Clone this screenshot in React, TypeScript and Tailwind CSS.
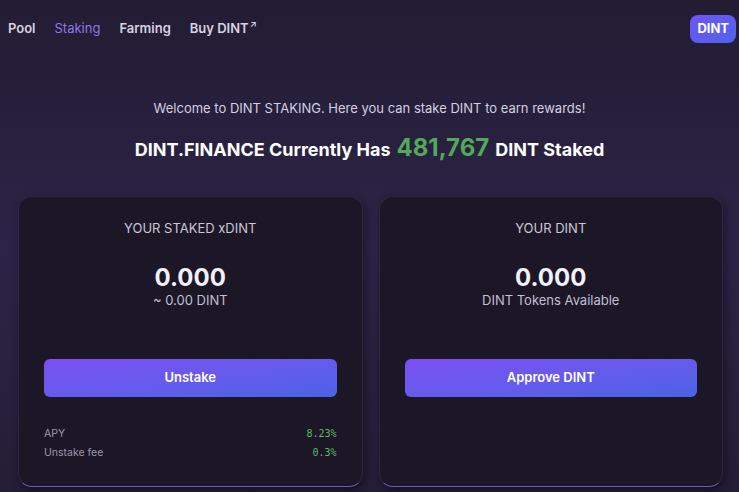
import React from "react";

function Card({
  title,
  value,
  sub,
  button,
  rows,
}: {
  title: string;
  value: string;
  sub: string;
  button: string;
  rows?: { label: string; value: string }[];
}) {
  return (
    <div className="flex h-[291px] flex-col rounded-[14px] border border-[#2c2640] border-b-[#6a58c8] bg-[#1b1727] px-[25px] pt-[22px] shadow-[2px_4px_10px_rgba(0,0,0,0.45)]">
      <div className="text-center text-[13px] leading-[18px] text-[#cbc7d8]">{title}</div>
      <div className="mt-[27px] text-center text-[24px] font-bold leading-[28px] text-[#f2f0f8]">{value}</div>
      <div className="text-center text-[13px] leading-[16px] text-[#c3bfd2]">{sub}</div>
      <button className="mt-[51px] h-[38px] w-full rounded-[6px] bg-gradient-to-br from-[#7c4ff2] to-[#4a63e6] text-[13px] font-semibold text-white">
        {button}
      </button>
      {rows && (
        <div className="mt-[30px] flex flex-col gap-[5px]">
          {rows.map((r) => (
            <div key={r.label} className="flex items-center justify-between text-[10.5px] leading-[14px]">
              <span className="text-[#9b97aa]">{r.label}</span>
              <span className="font-['DejaVu_Sans_Mono',monospace] text-[10px] text-[#5fb865]">{r.value}</span>
            </div>
          ))}
        </div>
      )}
    </div>
  );
}

export default function App() {
  return (
    <div className="min-h-[492px] w-full bg-gradient-to-b from-[#221c33] via-[#2c2447] to-[#241e36] font-['Inter',sans-serif]">
      <nav className="flex h-[56px] items-center justify-between pl-[8px] pr-[3px] pt-[2px]">
        <div className="flex items-center gap-[19px] text-[13px] font-semibold text-[#d6d3e0]">
          <span>Pool</span>
          <span className="font-normal text-[#8d78e6]">Staking</span>
          <span>Farming</span>
          <span className="flex items-start">
            Buy DINT<span className="ml-[1px] text-[9px] leading-[10px]">↗</span>
          </span>
        </div>
        <button className="h-[28px] rounded-[8px] bg-gradient-to-br from-[#6d55f6] to-[#4f62ea] px-[7px] text-[13px] font-bold text-white">
          DINT
        </button>
      </nav>
      <div className="mt-[43px] text-center text-[13px] leading-[18px] text-[#d3d0e0]">
        Welcome to DINT STAKING. Here you can stake DINT to earn rewards!
      </div>
      <div className="mt-[13px] flex items-baseline justify-center gap-[6px] text-[18px] font-bold text-white">
        <span>DINT.FINANCE Currently Has</span>
        <span className="text-[24px] text-[#53a85a]">481,767</span>
        <span>DINT Staked</span>
      </div>
      <div className="mt-[30px] grid grid-cols-2 gap-[16px] pl-[18px] pr-[16px]">
        <Card
          title="YOUR STAKED xDINT"
          value="0.000"
          sub="~ 0.00 DINT"
          button="Unstake"
          rows={[
            { label: "APY", value: "8.23%" },
            { label: "Unstake fee", value: "0.3%" },
          ]}
        />
        <Card title="YOUR DINT" value="0.000" sub="DINT Tokens Available" button="Approve DINT" />
      </div>
    </div>
  );
}
